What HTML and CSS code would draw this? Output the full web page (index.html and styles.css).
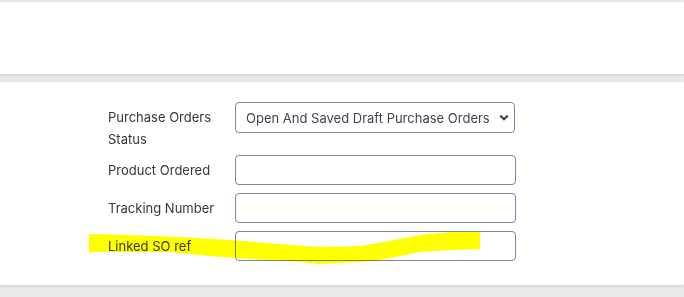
FILE: index.html
```html
<!DOCTYPE html>
<html lang="en">
<head>
    <meta charset="UTF-8">
    <meta name="viewport" content="width=device-width, initial-scale=1.0">
    <title>Purchase Orders Filter</title>
    <link rel="stylesheet" href="styles.css">
</head>
<body>
    <div class="page">
        <div class="card card-top"></div>
        <div class="card card-filter">
            <div class="filter-form">
                <label class="field-label label-wrap" for="po-status">Purchase Orders Status</label>
                <div class="select-wrap">
                    <select id="po-status" class="field-select">
                        <option>Open And Saved Draft Purchase Orders</option>
                        <option>Open Purchase Orders</option>
                        <option>Closed Purchase Orders</option>
                    </select>
                    <svg class="select-arrow" width="10" height="7" viewBox="0 0 10 7">
                        <path d="M1.2 1.4 L5 5.2 L8.8 1.4" fill="none" stroke="#3b3f46" stroke-width="2.1"/>
                    </svg>
                </div>

                <label class="field-label" for="product">Product Ordered</label>
                <input type="text" id="product" class="field-input">

                <label class="field-label" for="tracking">Tracking Number</label>
                <input type="text" id="tracking" class="field-input">

                <label class="field-label" for="so-ref">Linked SO ref</label>
                <input type="text" id="so-ref" class="field-input">
            </div>
        </div>
        <svg class="highlight" width="684" height="297" viewBox="0 0 684 297">
            <polygon fill="#ffff00" points="89,234 130,235 180,237 230,240 280,244 320,247 360,246 390,241 420,235 450,232 480,232 480,249 450,250 420,252 400,256 380,260 360,262 320,264 290,261 250,259 210,256 170,252 130,252 89,252"/>
        </svg>
    </div>
</body>
</html>
```

FILE: styles.css
```css
body {
    margin: 0;
    background: #e9e9e9;
    font-family: 'Inter', 'Segoe UI', sans-serif;
    font-size: 13px;
    color: #333;
}
.page {
    position: relative;
    width: 684px;
    height: 297px;
    overflow: hidden;
    padding-top: 2px;
    box-sizing: border-box;
}
.card {
    background: #fff;
    box-shadow: 0 1px 3px rgba(0, 0, 0, 0.12);
}
.card-top {
    height: 72px;
    margin-bottom: 8px;
}
.card-filter {
    height: 203px;
    padding: 20px 0 0 108px;
    box-sizing: border-box;
}
.filter-form {
    display: grid;
    grid-template-columns: 127px 281px;
    row-gap: 8px;
}
.field-label {
    padding: 5px 12px 0 0;
    line-height: 20px;
    color: #363636;
}
.label-wrap {
    padding-top: 4px;
    line-height: 22px;
    margin-bottom: -3px;
}
.select-wrap {
    position: relative;
    height: 31px;
}
.field-select {
    appearance: none;
    -webkit-appearance: none;
    width: 280px;
    height: 31px;
    padding: 0 20px 0 10px;
    border: 1px solid #7488a6;
    border-radius: 4px;
    background: #fff;
    font-family: inherit;
    font-size: 13px;
    color: #3d4450;
    outline: none;
}
.select-arrow {
    position: absolute;
    right: 7px;
    top: 12px;
}
.field-input {
    width: 281px;
    height: 30px;
    padding: 0 8px;
    border: 1px solid #7488a6;
    border-radius: 4px;
    box-sizing: border-box;
    font-family: inherit;
    font-size: 13px;
    outline: none;
}
.highlight {
    position: absolute;
    left: 0;
    top: 0;
    mix-blend-mode: multiply;
    pointer-events: none;
}
```
